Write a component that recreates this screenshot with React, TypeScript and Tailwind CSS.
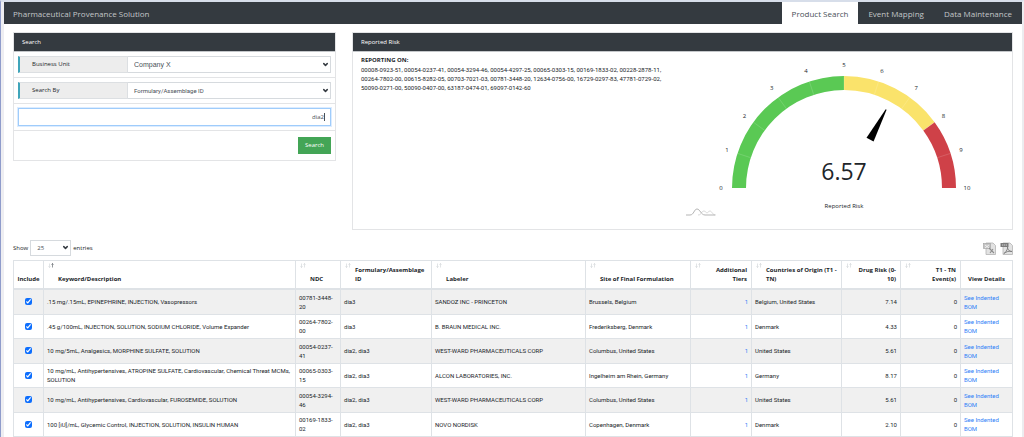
import { useState } from "react";
import type { ReactNode } from "react";
import { ChevronDown } from "lucide-react";

type Drug = {
    description: string;
    ndc: string;
    formulary: string;
    labeler: string;
    site: string;
    tiers: number;
    origin: string;
    risk: string;
    events: number;
};

const drugs: Drug[] = [
    { description: ".15 mg/.15mL, EPINEPHRINE, INJECTION, Vasopressors", ndc: "00781-3448-20", formulary: "dia3", labeler: "SANDOZ INC - PRINCETON", site: "Brussels, Belgium", tiers: 1, origin: "Belgium, United States", risk: "7.14", events: 0 },
    { description: ".45 g/100mL, INJECTION, SOLUTION, SODIUM CHLORIDE, Volume Expander", ndc: "00264-7802-00", formulary: "dia3", labeler: "B. BRAUN MEDICAL INC.", site: "Frederiksberg, Denmark", tiers: 1, origin: "Denmark", risk: "4.33", events: 0 },
    { description: "10 mg/5mL, Analgesics, MORPHINE SULFATE, SOLUTION", ndc: "00054-0237-41", formulary: "dia2, dia3", labeler: "WEST-WARD PHARMACEUTICALS CORP", site: "Columbus, United States", tiers: 1, origin: "United States", risk: "5.61", events: 0 },
    { description: "10 mg/mL, Antihypertensives, ATROPINE SULFATE, Cardiovascular, Chemical Threat MCMs, SOLUTION", ndc: "00065-0303-15", formulary: "dia2, dia3", labeler: "ALCON LABORATORIES, INC.", site: "Ingelheim am Rhein, Germany", tiers: 1, origin: "Germany", risk: "8.17", events: 0 },
    { description: "10 mg/mL, Antihypertensives, Cardiovascular, FUROSEMIDE, SOLUTION", ndc: "00054-3294-46", formulary: "dia2, dia3", labeler: "WEST-WARD PHARMACEUTICALS CORP", site: "Columbus, United States", tiers: 1, origin: "United States", risk: "5.61", events: 0 },
    { description: "100 [iU]/mL, Glycemic Control, INJECTION, SOLUTION, INSULIN HUMAN", ndc: "00169-1833-02", formulary: "dia2, dia3", labeler: "NOVO NORDISK", site: "Copenhagen, Denmark", tiers: 1, origin: "Denmark", risk: "2.10", events: 0 },
];

const reportingOn = [
    "00008-0923-51", "00054-0237-41", "00054-3294-46", "00054-4297-25", "00065-0303-15", "00169-1833-02", "00228-2878-11",
    "00264-7802-00", "00615-8282-05", "00703-7021-03", "00781-3448-20", "12634-0756-00", "16729-0297-83", "47781-0729-02",
    "50090-0271-00", "50090-0407-00", "63187-0474-01", "69097-0142-60",
];

// gauge geometry, in svg units
const CX = 164;
const CY = 136;
const OUTER = 112;
const INNER = 98;

function polar(value: number, radius: number) {
    const angle = Math.PI * (1 - value / 10);
    return { x: CX + radius * Math.cos(angle), y: CY - radius * Math.sin(angle) };
}

function band(from: number, to: number) {
    const a = polar(from, OUTER);
    const b = polar(to, OUTER);
    const c = polar(to, INNER);
    const d = polar(from, INNER);
    return `M${a.x} ${a.y} A${OUTER} ${OUTER} 0 0 1 ${b.x} ${b.y} L${c.x} ${c.y} A${INNER} ${INNER} 0 0 0 ${d.x} ${d.y} Z`;
}

function Gauge({ value }: { value: number }) {
    const ticks = Array.from({ length: 11 }, (_, i) => i);
    return (
        <svg viewBox="0 0 328 177" className="w-[328px] shrink-0" role="img" aria-label="Reported Risk gauge">
            <path d={band(0, 5)} fill="#5ac954" />
            <path d={band(5, 8)} fill="#fae36b" />
            <path d={band(8, 10)} fill="#cf4148" />
            {ticks.slice(1, 10).map((tick) => {
                const a = polar(tick, INNER);
                const b = polar(tick, OUTER);
                return <line key={tick} x1={a.x} y1={a.y} x2={b.x} y2={b.y} stroke="#fff" strokeOpacity="0.15" />;
            })}
            {ticks.map((tick) => {
                const p = polar(tick, 123);
                return (
                    <text key={tick} x={p.x} y={p.y + 2} textAnchor="middle" fontSize="6" fill="#212529">
                        {tick}
                    </text>
                );
            })}
            <g transform={`rotate(${(value - 5) * 18} ${CX} ${CY})`}>
                <polygon points={`${CX - 4},${CY - 55} ${CX - 0.5},${CY - 89} ${CX + 0.5},${CY - 89} ${CX + 4},${CY - 55}`} fill="#000" />
            </g>
            <text x={CX} y={CY - 8} textAnchor="middle" fontSize="23" fill="#212529">
                {value}
            </text>
            <text x={CX} y={CY + 20} textAnchor="middle" fontSize="6" fill="#212529">
                Reported Risk
            </text>
            <g fill="none" strokeWidth="1">
                <path d="M18 163 C22 163 21 159 24 159 C26 159 26 161 27 161 C28 161 28 159 30 159 C32 159 32 163 36 163" stroke="#dadada" />
                <path d="M6 163 H10 C14 163 14 157 17 157 C20 157 21 163 25 163 H35" stroke="#b5b5b5" />
            </g>
        </svg>
    );
}

function Card({ title, children }: { title: string; children: ReactNode }) {
    return (
        <section className="border border-[#e3e4e6]">
            <h2 className="border-b border-[#c4c7ca] bg-[#343a40] px-2 py-1 leading-[10px] text-white">{title}</h2>
            {children}
        </section>
    );
}

function SelectField({ id, label, value, selectClass }: { id: string; label: string; value: string; selectClass: string }) {
    return (
        <div className="flex border-b border-[#e3e4e6] px-1 py-1">
            <label htmlFor={id} className="flex w-[110px] shrink-0 items-center border border-l-2 border-[#dcdfe2] border-l-[#3fa5ba] bg-[#ededed] pl-3">
                {label}
            </label>
            <div className="relative flex-1">
                <select id={id} className={`block h-[17px] w-full appearance-none border border-l-0 border-[#d6dade] bg-white px-1.5 text-[#495057] ${selectClass}`}>
                    <option>{value}</option>
                </select>
                <ChevronDown className="pointer-events-none absolute top-[5px] right-0.5 size-[7px] text-[#343a40]" strokeWidth={5} />
            </div>
        </div>
    );
}

function Heading({ children, active, right }: { children: ReactNode; active?: boolean; right?: boolean }) {
    return (
        <th scope="col" className={`border border-b-2 border-[#dee2e6] p-0 align-top font-bold ${right ? "text-right" : "text-left"}`}>
            <button type="button" className={`relative flex h-[27px] w-full items-end pb-1 font-bold ${right ? "justify-end pr-1 pl-3.5 text-right" : "pl-3.5 text-left"}`}>
                <svg viewBox="0 0 6 5" className="absolute top-0.5 left-1 h-[5px] w-1.5" fill="none" strokeWidth="0.6" aria-hidden="true">
                    <path d="M1.5 0.5 V4.5 M0.5 3.3 L1.5 4.5 L2.5 3.3" stroke="#cdd1d5" />
                    <path d="M4.5 4.5 V0.5 M3.5 1.7 L4.5 0.5 L5.5 1.7" stroke={active ? "#495057" : "#cdd1d5"} />
                </svg>
                <span>{children}</span>
            </button>
        </th>
    );
}

function ExportIcon({ kind }: { kind: "excel" | "pdf" }) {
    return (
        <svg viewBox="0 0 13 13" className="size-[13px]" fill="none" aria-hidden="true">
            <path d="M3 1 H10 L12.5 3.5 V12.5 H3 Z" fill="#e2e2e2" stroke="#b4b4b4" strokeWidth="0.8" />
            {kind === "excel" ? (
                <>
                    <rect x="0.5" y="1.5" width="7" height="5" fill="#c4c4c4" stroke="#a0a0a0" strokeWidth="0.6" />
                    <path d="M2 3 L6 6 M6 3 L2 6" stroke="#f4f4f4" strokeWidth="0.9" />
                    <path d="M6 6 L11 11 M10 7 L7 11" stroke="#8c8c8c" strokeWidth="1.1" />
                </>
            ) : (
                <>
                    <rect x="0.5" y="1" width="8" height="4" fill="#7c7c7c" />
                    <path d="M2 3 H7" stroke="#d5d5d5" strokeWidth="1" strokeDasharray="1.4 0.6" />
                    <path d="M4 11.5 C7 9 8 6 7.5 5 C7.5 8 9.5 9.5 12 9.5 C9 8.8 6.5 9.5 4 11.5 Z" stroke="#7c7c7c" strokeWidth="0.9" />
                </>
            )}
        </svg>
    );
}

export default function App() {
    const [query, setQuery] = useState("dia2");

    return (
        <div className="min-h-screen border-t-2 border-r-2 border-l border-t-[#d7deea] border-r-[#ececef] border-l-[#8f9ccb] bg-white font-['Open_Sans','Noto_Sans',sans-serif] text-[6px] leading-[9px] text-[#212529]">
            <div className="border-l-[3px] border-[#eeeef2]">
                <header className="flex h-[22px] items-stretch justify-between bg-[#343a40] text-[8px] text-[#c3c6c9]">
                    <h1 className="flex items-center pl-[9px]">Pharmaceutical Provenance Solution</h1>
                    <nav className="flex">
                        <a href="#search" className="flex items-center bg-white px-2.5 text-[#495057]">Product Search</a>
                        <a href="#events" className="flex items-center px-2.5">Event Mapping</a>
                        <a href="#data" className="flex items-center px-2.5">Data Maintenance</a>
                    </nav>
                </header>

                <main className="px-[9px]">
                    <div className="grid grid-cols-[323fr_661fr] items-start gap-4 pt-2">
                        <Card title="Search">
                            <form onSubmit={(e) => e.preventDefault()}>
                                <SelectField id="unit" label="Business Unit" value="Company X" selectClass="font-['Liberation_Sans',sans-serif] text-[7px]" />
                                <SelectField id="by" label="Search By" value="Formulary/Assemblage ID" selectClass="font-[Roboto,sans-serif] text-[6px]" />
                                <div className="border-b border-[#e3e4e6] p-1">
                                    <div className="relative">
                                        <input
                                            aria-label="Search text"
                                            value={query}
                                            onChange={(e) => setQuery(e.target.value)}
                                            className="block h-[18px] w-full border border-[#9fccfb] px-1.5 text-right text-[#495057] caret-transparent ring-1 ring-[#dcecff] outline-none"
                                        />
                                        <span className="pointer-events-none absolute top-[5px] right-1.5 h-2 w-px bg-[#495057]" aria-hidden="true" />
                                    </div>
                                </div>
                                <div className="flex justify-end px-1 py-1.5">
                                    <button type="submit" className="h-[17px] bg-[#43a556] px-[7px] text-white">Search</button>
                                </div>
                            </form>
                        </Card>

                        <Card title="Reported Risk">
                            <div className="flex justify-between pr-1">
                                <div className="w-[320px] pt-1 pl-2">
                                    <p className="font-bold">REPORTING ON:</p>
                                    <p className="font-[Roboto,sans-serif]">{reportingOn.join(", ")}</p>
                                </div>
                                <Gauge value={6.57} />
                            </div>
                        </Card>
                    </div>

                    <div className="flex items-center justify-between pt-2.5 pb-1">
                        <div className="flex items-center gap-0.5">
                            <label htmlFor="count">Show</label>
                            <div className="relative">
                                <select id="count" className="block h-4 w-[41px] appearance-none border border-[#d6dade] bg-white px-1.5 text-[#495057]">
                                    <option>25</option>
                                </select>
                                <ChevronDown className="pointer-events-none absolute top-1 right-0.5 size-[7px] text-[#343a40]" strokeWidth={5} />
                            </div>
                            <span>entries</span>
                        </div>
                        <div className="flex gap-1">
                            <button type="button" aria-label="Export to Excel"><ExportIcon kind="excel" /></button>
                            <button type="button" aria-label="Export to PDF"><ExportIcon kind="pdf" /></button>
                        </div>
                    </div>

                    <table className="w-full table-fixed border-collapse">
                        <colgroup>
                            <col className="w-[30px]" />
                            <col />
                            <col className="w-[45px]" />
                            <col className="w-[91px]" />
                            <col className="w-[154px]" />
                            <col className="w-[105px]" />
                            <col className="w-[61px]" />
                            <col className="w-[90px]" />
                            <col className="w-[59px]" />
                            <col className="w-[60px]" />
                            <col className="w-[52px]" />
                        </colgroup>
                        <thead>
                            <tr>
                                <th scope="col" className="border border-b-2 border-[#dee2e6] p-0 pb-1 align-bottom font-bold">Include</th>
                                <Heading active>Keyword/Description</Heading>
                                <Heading>NDC</Heading>
                                <Heading>Formulary/Assemblage ID</Heading>
                                <Heading>Labeler</Heading>
                                <Heading>Site of Final Formulation</Heading>
                                <Heading right>Additional Tiers</Heading>
                                <Heading>Countries of Origin (T1 - TN)</Heading>
                                <Heading right>Drug Risk (0-10)</Heading>
                                <Heading right>T1 - TN Event(s)</Heading>
                                <th scope="col" className="border border-b-2 border-[#dee2e6] p-0 pb-1 align-bottom font-bold">View Details</th>
                            </tr>
                        </thead>
                        <tbody className="font-[Roboto,'Noto_Sans',sans-serif]">
                            {drugs.map((drug) => (
                                <tr key={drug.ndc} className="odd:h-[25px] odd:bg-[#f0f0f0] even:h-[24px] [&>td]:border [&>td]:border-[#dee2e6] [&>td]:px-[3px] [&>td]:py-0.5">
                                    <td className="text-center">
                                        <input type="checkbox" defaultChecked aria-label={`Include ${drug.ndc}`} className="mx-auto block size-[7px] accent-[#0d6efd]" />
                                    </td>
                                    <td>{drug.description}</td>
                                    <td>{drug.ndc}</td>
                                    <td>{drug.formulary}</td>
                                    <td>{drug.labeler}</td>
                                    <td>{drug.site}</td>
                                    <td className="text-right"><a href="#tiers" className="text-[#3b82f6]">{drug.tiers}</a></td>
                                    <td>{drug.origin}</td>
                                    <td className="text-right">{drug.risk}</td>
                                    <td className="text-right">{drug.events}</td>
                                    <td><a href="#bom" className="text-[#2f80f7]">See Indented BOM</a></td>
                                </tr>
                            ))}
                        </tbody>
                    </table>
                </main>
            </div>
        </div>
    );
}
